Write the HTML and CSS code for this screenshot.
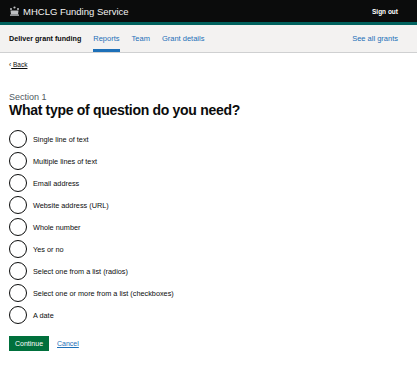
FILE: index.html
```html
<!DOCTYPE html>
<html lang="en">
<head>
<meta charset="utf-8">
<title>What type of question do you need?</title>
<link rel="stylesheet" href="styles.css">
</head>
<body>
<header class="site-header">
  <div class="brand">
    <svg class="crown" width="11" height="10" viewBox="0 0 22 20" aria-hidden="true">
      <g fill="#bfc1c3">
        <circle cx="11" cy="3" r="2.2"/>
        <circle cx="4" cy="6" r="2"/>
        <circle cx="18" cy="6" r="2"/>
        <path d="M3 9h16l-1 8H4z"/>
        <rect x="2" y="17" width="18" height="2.5"/>
      </g>
    </svg>
    <span class="brand-name">MHCLG Funding Service</span>
  </div>
  <a class="sign-out" href="#">Sign out</a>
</header>
<nav class="service-nav">
  <div class="nav-left">
    <span class="nav-title">Deliver grant funding</span>
    <a class="nav-link active" href="#">Reports</a>
    <a class="nav-link" href="#">Team</a>
    <a class="nav-link" href="#">Grant details</a>
  </div>
  <a class="nav-link" href="#">See all grants</a>
</nav>
<main class="main">
  <a class="back" href="#"><span class="chev">‹</span> Back</a>
  <span class="caption">Section 1</span>
  <h1 class="heading">What type of question do you need?</h1>
  <div class="radios">
    <label class="radio"><span class="circle"></span><span>Single line of text</span></label>
    <label class="radio"><span class="circle"></span><span>Multiple lines of text</span></label>
    <label class="radio"><span class="circle"></span><span>Email address</span></label>
    <label class="radio"><span class="circle"></span><span>Website address (URL)</span></label>
    <label class="radio"><span class="circle"></span><span>Whole number</span></label>
    <label class="radio"><span class="circle"></span><span>Yes or no</span></label>
    <label class="radio"><span class="circle"></span><span>Select one from a list (radios)</span></label>
    <label class="radio"><span class="circle"></span><span>Select one or more from a list (checkboxes)</span></label>
    <label class="radio"><span class="circle"></span><span>A date</span></label>
  </div>
  <div class="actions">
    <button class="btn" type="button">Continue</button>
    <a class="cancel" href="#">Cancel</a>
  </div>
</main>
</body>
</html>
```

FILE: styles.css
```css
* { box-sizing: border-box; }
body {
  margin: 0;
  font-family: "Liberation Sans", Arial, sans-serif;
  color: #0b0c0c;
  background: #fff;
}
a { color: #1d70b8; }
.site-header {
  height: 25px;
  background: #0b0c0c;
  border-bottom: 3px solid #00625e;
  display: flex;
  align-items: center;
  justify-content: space-between;
  padding: 0 19px 0 9px;
}
.brand { display: flex; align-items: center; gap: 3px; }
.brand-name { color: #f3f2f1; font-size: 9.5px; }
.sign-out { color: #fff; font-size: 6.5px; font-weight: bold; text-decoration: none; }
.service-nav {
  height: 28px;
  background: #f3f2f1;
  border-bottom: 1px solid #cfd0d1;
  display: flex;
  justify-content: space-between;
  align-items: stretch;
  padding: 0 19px 0 9px;
  font-size: 7.5px;
}
.nav-left { display: flex; align-items: stretch; gap: 12px; }
.nav-title { font-weight: bold; font-size: 7.2px; display: flex; align-items: center; }
.nav-link {
  display: flex;
  align-items: center;
  text-decoration: none;
  border-bottom: 3px solid transparent;
  border-top: 3px solid transparent;
}
.nav-link.active { border-bottom-color: #1d70b8; }
.main { padding: 0 9px; }
.back {
  display: inline-block;
  font-size: 6.5px;
  color: #0b0c0c;
  margin-bottom: 24px;
}
.chev { display: inline-block; }
.caption { display: block; font-size: 9px; color: #505a5f; }
.heading { margin: 0 0 12px; font-size: 14px; letter-spacing: -0.3px; font-weight: bold; }
.radios { display: flex; flex-direction: column; gap: 4px; }
.radio {
  display: flex;
  align-items: center;
  gap: 6px;
  font-size: 7.3px;
}
.circle {
  width: 18px;
  height: 18px;
  border: 1.5px solid #0b0c0c;
  border-radius: 50%;
  flex: none;
}
.actions { display: flex; align-items: center; gap: 8px; margin-top: 12px; }
.btn {
  background: #00703c;
  color: #fff;
  border: 0;
  box-shadow: 0 2px 0 #002d18;
  font-family: inherit;
  font-size: 7px;
  padding: 4px 6px;
}
.cancel { font-size: 7px; }
```
